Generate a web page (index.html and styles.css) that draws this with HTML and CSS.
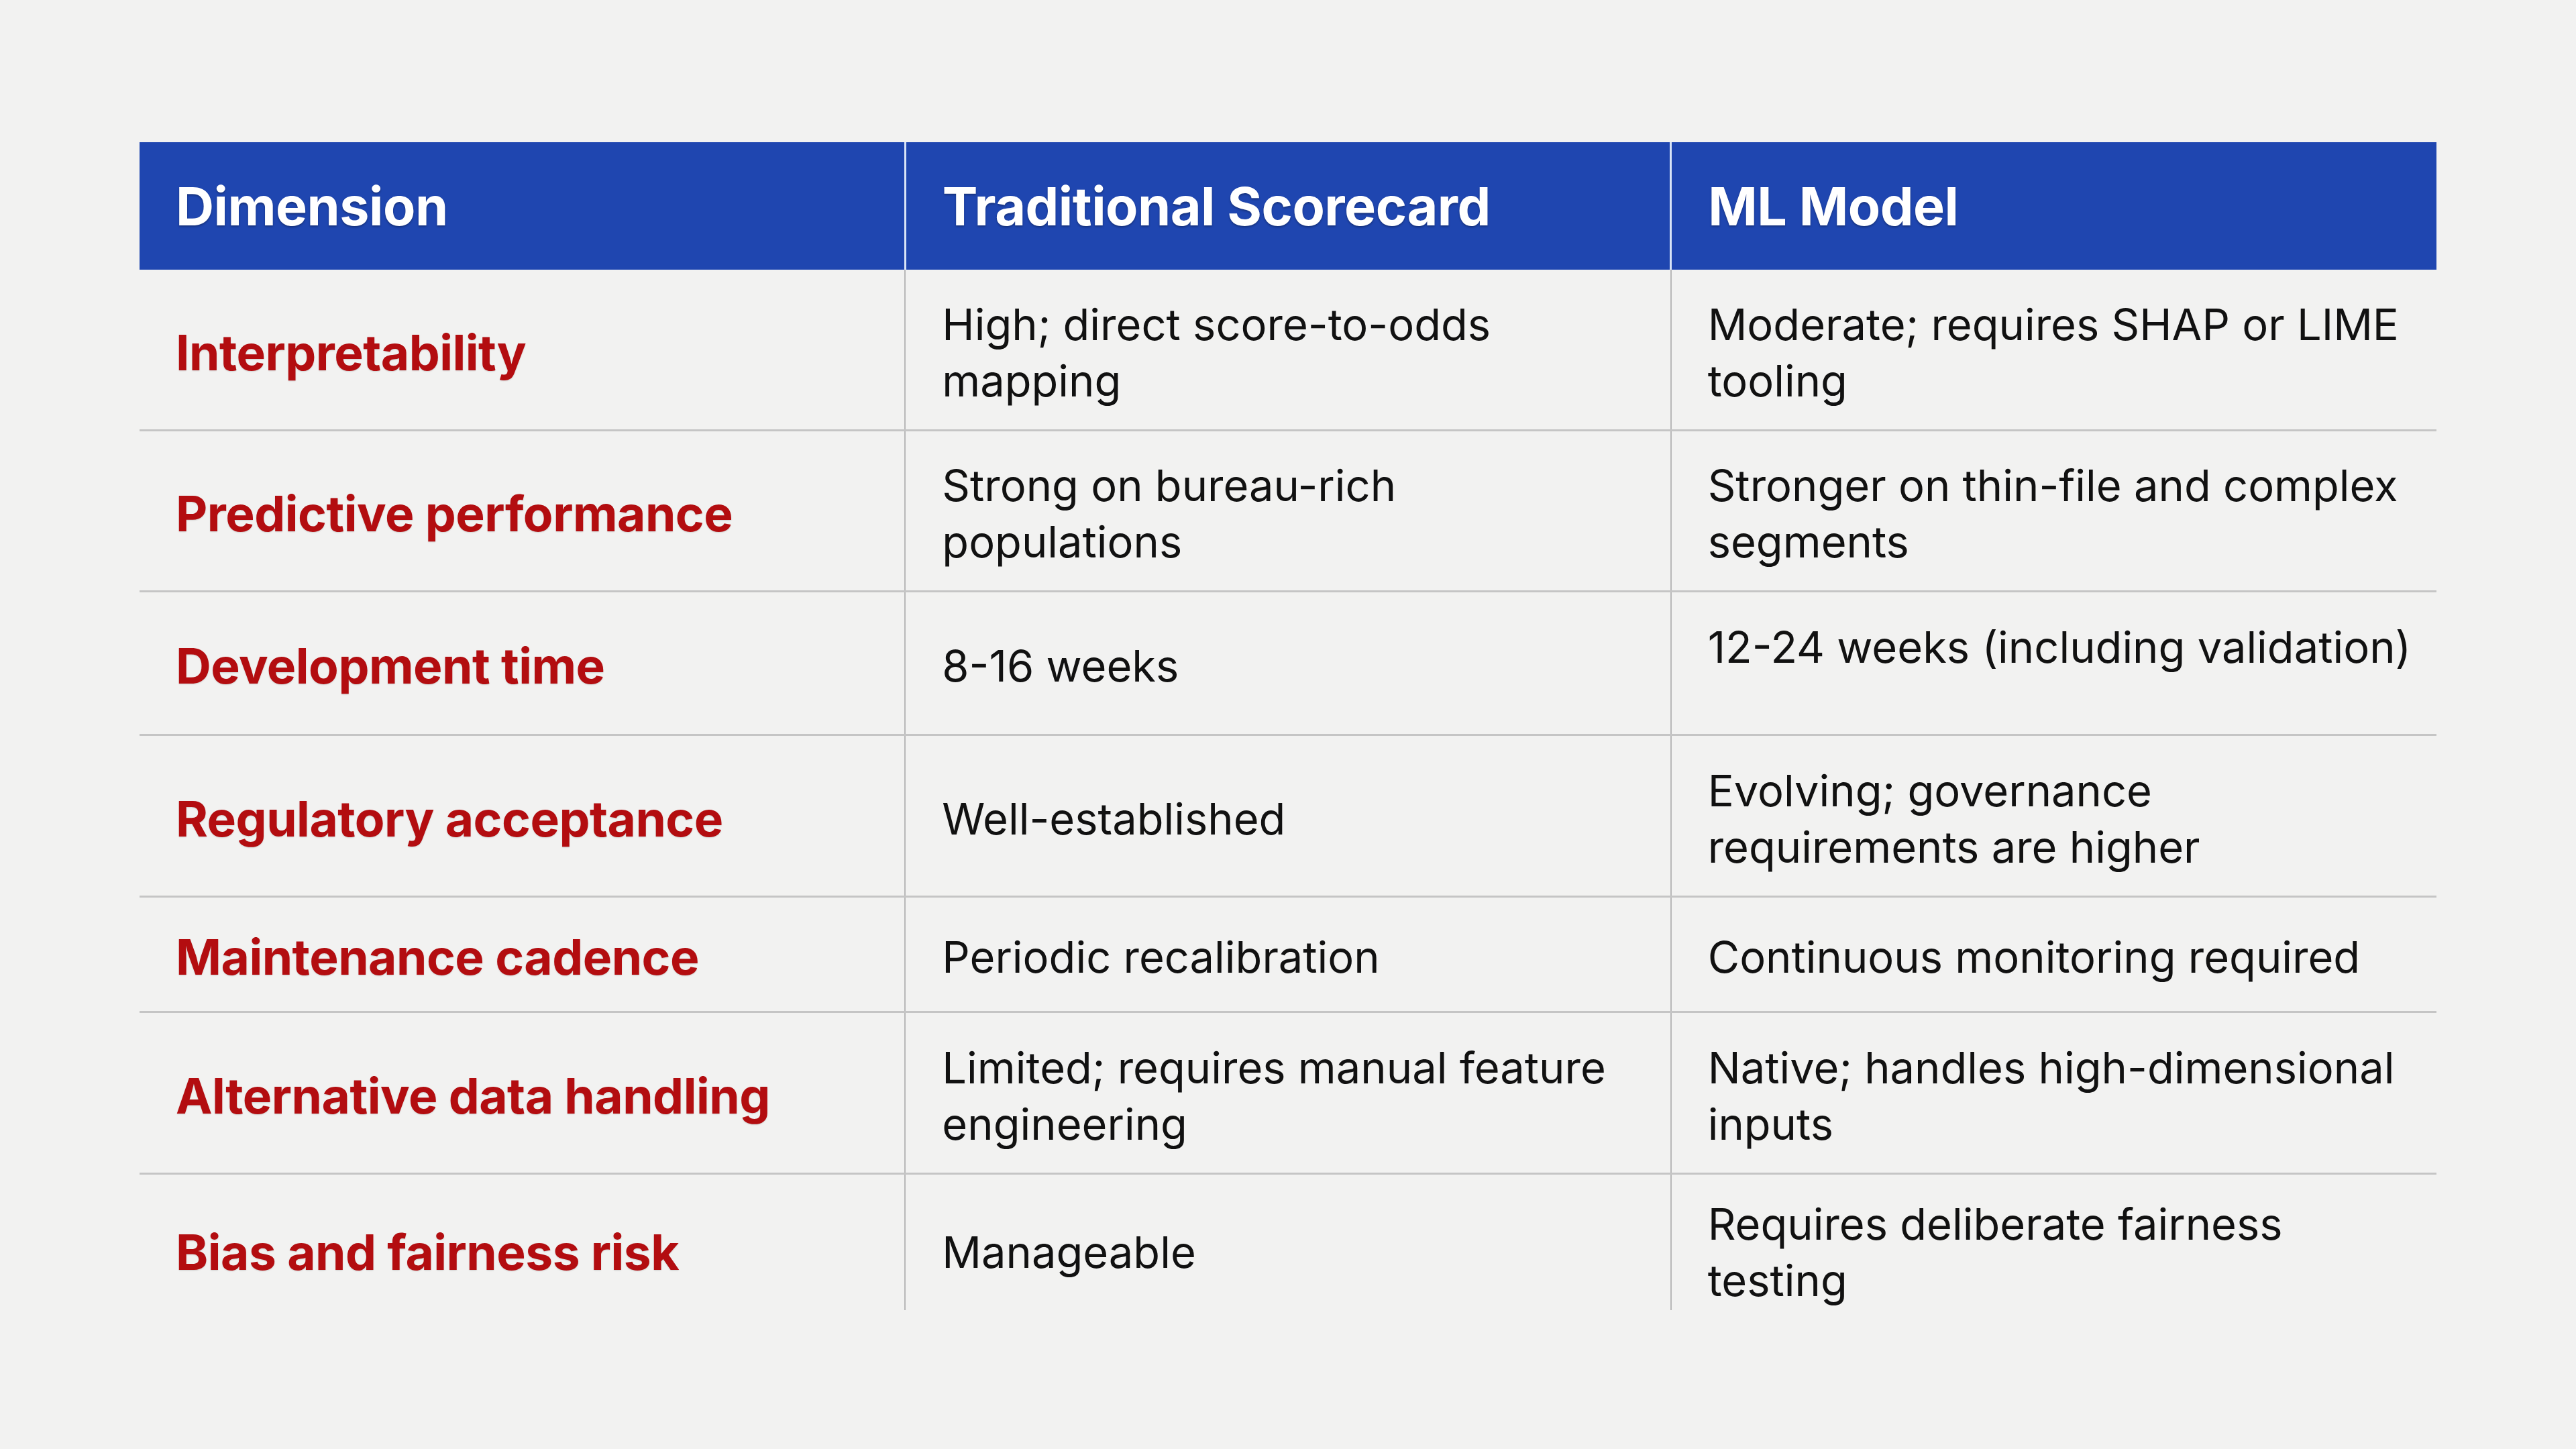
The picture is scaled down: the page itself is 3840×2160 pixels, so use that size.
FILE: index.html
```html
<!DOCTYPE html>
<html lang="en">
<head>
<meta charset="utf-8">
<title>Traditional Scorecard vs ML Model</title>
<link rel="stylesheet" href="styles.css">
</head>
<body>
<table class="cmp">
  <thead>
    <tr>
      <th>Dimension</th>
      <th>Traditional Scorecard</th>
      <th>ML Model</th>
    </tr>
  </thead>
  <tbody>
    <tr class="r-a">
      <td class="dim">Interpretability</td>
      <td>High; direct score-to-odds<br>mapping</td>
      <td>Moderate; requires SHAP or LIME<br>tooling</td>
    </tr>
    <tr class="r-b">
      <td class="dim">Predictive performance</td>
      <td>Strong on bureau-rich<br>populations</td>
      <td>Stronger on thin-file and complex<br>segments</td>
    </tr>
    <tr class="r-c">
      <td class="dim">Development time</td>
      <td>8-16 weeks</td>
      <td class="top">12-24 weeks (including validation)</td>
    </tr>
    <tr class="r-d">
      <td class="dim">Regulatory acceptance</td>
      <td>Well-established</td>
      <td>Evolving; governance<br>requirements are higher</td>
    </tr>
    <tr class="r-e">
      <td class="dim">Maintenance cadence</td>
      <td>Periodic recalibration</td>
      <td>Continuous monitoring required</td>
    </tr>
    <tr class="r-f">
      <td class="dim">Alternative data handling</td>
      <td>Limited; requires manual feature<br>engineering</td>
      <td>Native; handles high-dimensional<br>inputs</td>
    </tr>
    <tr class="r-g">
      <td class="dim">Bias and fairness risk</td>
      <td>Manageable</td>
      <td>Requires deliberate fairness<br>testing</td>
    </tr>
  </tbody>
</table>
</body>
</html>
```

FILE: styles.css
```css
html, body {
  margin: 0;
  padding: 0;
  background: #f2f2f1;
}

body {
  font-family: "Inter", "Liberation Sans", sans-serif;
  color: #111;
}

.cmp {
  width: 3424px;
  margin: 212px 0 0 208px;
  border-collapse: collapse;
  table-layout: fixed;
}

.cmp th {
  height: 190px;
  padding: 0 20px 0 54px;
  background: #1f46b0;
  color: #fff;
  font-size: 79px;
  font-weight: 700;
  letter-spacing: -0.5px;
  text-align: left;
  vertical-align: middle;
  white-space: nowrap;
  text-shadow: 0 2px 3px rgba(0, 0, 0, 0.3);
}

.cmp th + th {
  border-left: 3px solid #d9e4f7;
}

.cmp td {
  padding: 10px 10px 0 54px;
  font-size: 65px;
  line-height: 84px;
  font-weight: 400;
  text-align: left;
  vertical-align: middle;
  white-space: nowrap;
  border-bottom: 3px solid #c5c5c5;
}

.cmp td + td {
  border-left: 2px solid #b8b8b8;
}

.cmp tbody tr:last-child td {
  border-bottom: none;
}

.cmp td.dim {
  color: #b30d10;
  font-size: 73px;
  font-weight: 700;
  letter-spacing: -0.5px;
  text-shadow: 0 1px 2px rgba(0, 0, 0, 0.15);
}

.cmp td.top {
  vertical-align: top;
  padding-top: 40px;
}

.r-a { height: 239px; }
.r-b { height: 240px; }
.r-c { height: 214px; }
.r-d { height: 241px; }
.r-e { height: 172px; }
.r-f { height: 241px; }
.r-g { height: 204px; }

.cmp .r-g td {
  padding-top: 30px;
}
```
